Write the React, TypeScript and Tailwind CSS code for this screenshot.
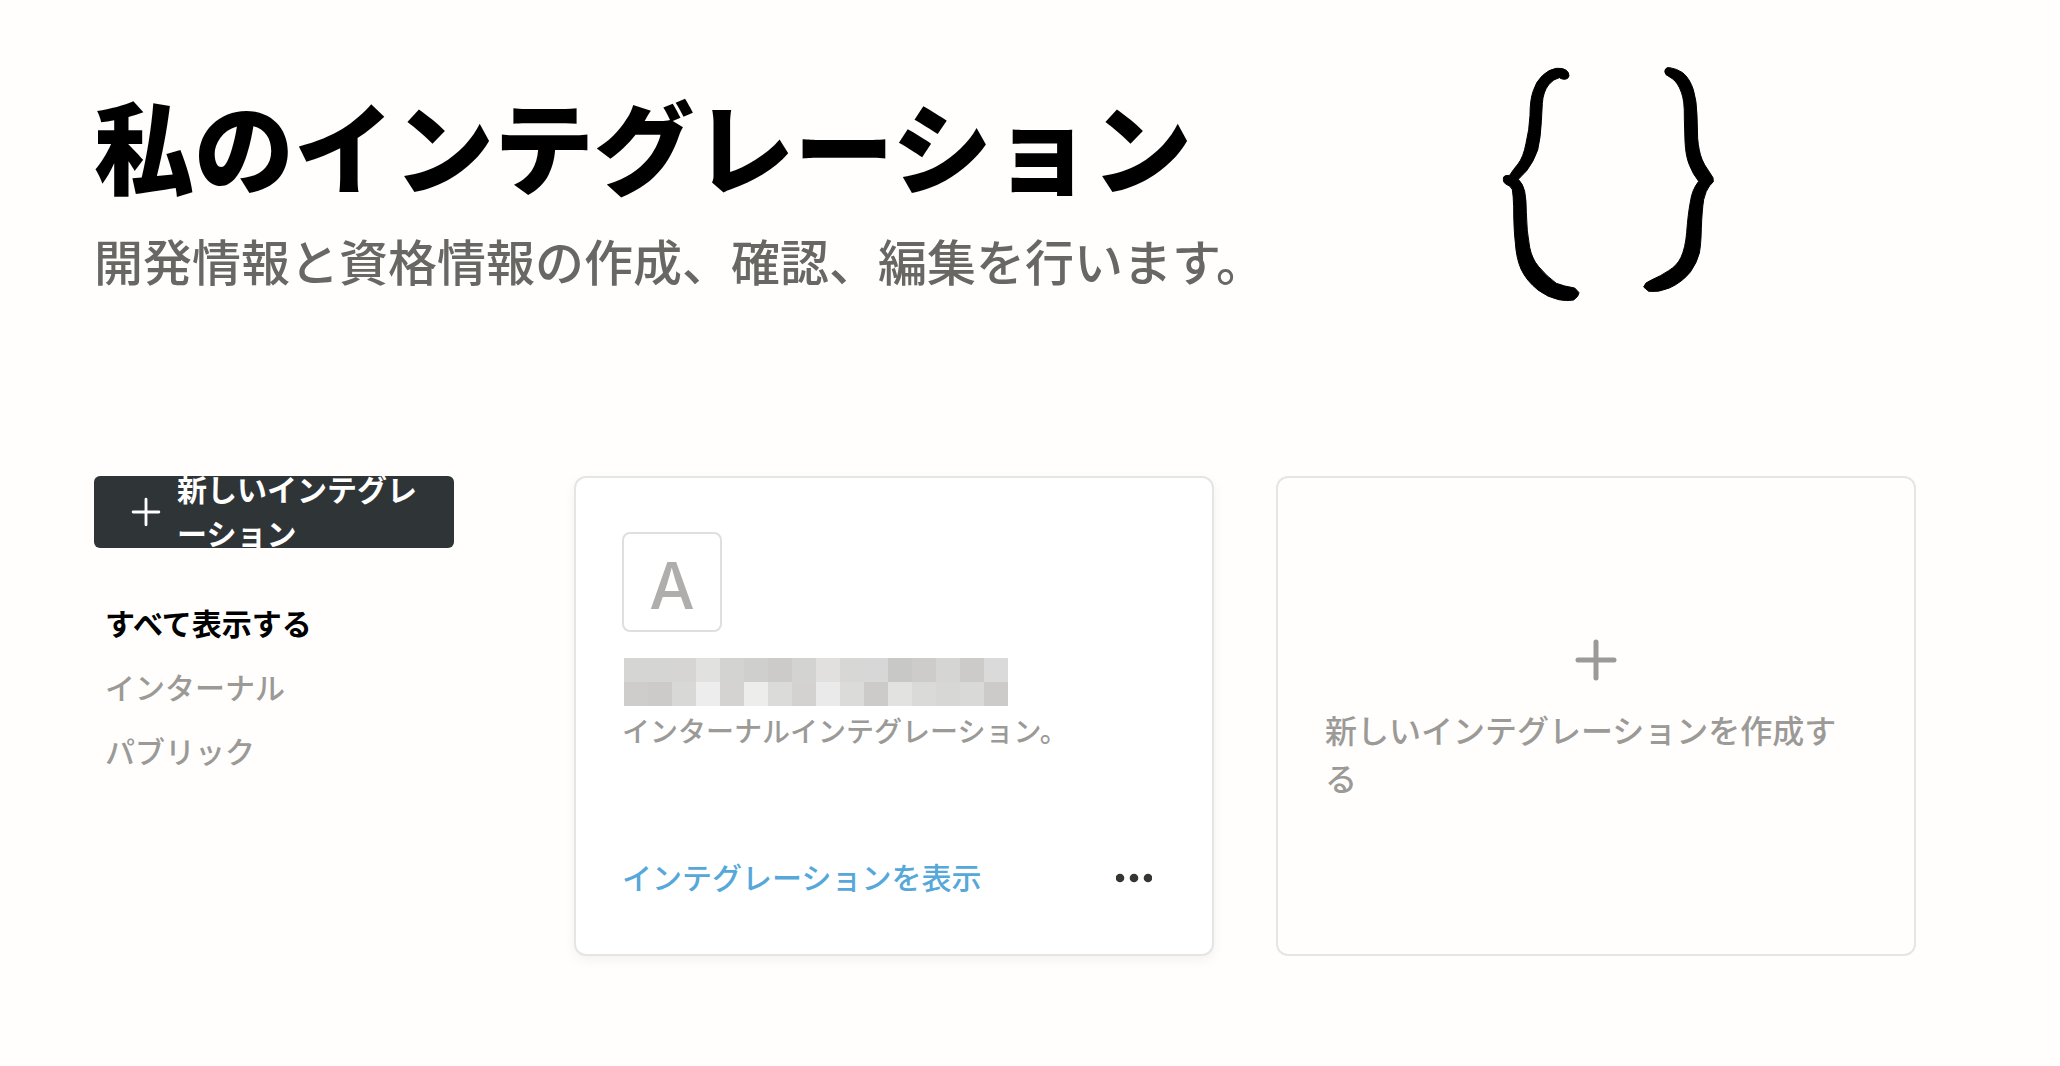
import { memo } from 'react';

interface NavItem {
  label: string;
  active?: boolean;
}

const NAV_ITEMS: NavItem[] = [
  { label: 'すべて表示する', active: true },
  { label: 'インターナル' },
  { label: 'パブリック' },
];

// Cell colours of the pixelated integration name, row by row.
const NAME_CELLS = [
  ['#d5d5d4', '#d5d5d4', '#d6d5d4', '#e1e1df', '#d3d3d2', '#cfcfce', '#cccbc9', '#d3d3d2', '#e1e0de', '#d7d7d6', '#d7d7d7', '#c8c8c6', '#cdccca', '#d5d5d4', '#cccbc9', '#dadada'],
  ['#cecdcc', '#cccbca', '#d8d8d7', '#ededed', '#d4d3d2', '#ededeb', '#dbdbda', '#d3d2d0', '#eaeaea', '#dbdbda', '#cccbca', '#e2e2e0', '#dadad9', '#d7d7d6', '#d9d9d8', '#cccbca'],
];

const PlusIcon = ({ className, strokeWidth }: { className: string; strokeWidth: number }) => (
  <svg viewBox="0 0 42 42" className={className} fill="none" stroke="currentColor" strokeWidth={strokeWidth} strokeLinecap="round" aria-hidden="true">
    <path d="M21 3v36M3 21h36" />
  </svg>
);

const Braces = memo(() => (
  <svg viewBox="0 0 780 810" className="w-[260px] h-[270px] shrink-0" fill="#000" stroke="#000" strokeWidth="3" strokeLinejoin="round" aria-hidden="true">
    <path d="M267 78Q264 88 254 88Q246 88 238 83Q220 87 206 104Q189 126 187 160L184 215Q182 262 173 300Q161 335 140 362L115 388Q129 402 134 424Q139 450 139 488Q140 545 149 592Q156 627 176 650Q201 680 229 700Q252 709 284 714Q292 722 297 728L293 739L281 750Q261 754 236 749Q203 742 174 720Q139 692 123 657Q109 625 106 578Q101 535 101 470Q100 437 97 419Q92 407 77 402Q70 397 70 389Q68 380 76 377L89 376Q100 358 114 342Q130 322 138 280Q148 240 150 196Q150 148 160 122Q168 95 187 77Q207 58 229 55Q250 53 259 61Q267 67 267 78Z" />
    <path d="M556 58Q560 51 569 53Q590 56 608 68Q629 85 640 119Q650 152 651 196L653 265Q656 303 666 328Q673 345 684 360L699 383L700 395L689 407Q677 422 671 449Q666 480 664 535Q663 583 658 609Q651 638 631 666Q606 697 568 714Q535 728 506 724Q497 716 491 711L498 699L514 690Q544 677 566 662Q592 646 603 622Q616 594 620 548Q624 492 631 456Q636 419 656 394Q638 371 629 347Q617 320 615 274L613 205Q614 151 604 127Q594 98 577 86Q565 78 558 74Q552 66 556 58Z" />
  </svg>
));
Braces.displayName = 'Braces';

const Sidebar = () => (
  <aside className="w-[360px] shrink-0">
    <button type="button" className="flex items-center w-full h-[72px] pl-[37px] pr-8 gap-4 overflow-hidden rounded-md bg-[#2f3437] text-white text-left">
      <PlusIcon className="w-[30px] h-[30px] shrink-0" strokeWidth={4} />
      <span className="pb-1 text-[30px] leading-[44px] font-bold">新しいインテグレーション</span>
    </button>
    <nav className="mt-[42px] flex flex-col px-[11px] text-[30px] leading-[64px]">
      {NAV_ITEMS.map((item) => (
        <a key={item.label} href="#" className={item.active ? 'text-black font-bold' : 'text-[#9b9a97] font-medium'}>
          {item.label}
        </a>
      ))}
    </nav>
  </aside>
);

const IntegrationCard = () => (
  <article className="flex flex-col h-[480px] px-[46px] pt-[54px] pb-[46px] rounded-xl border-2 border-[#e5e5e4] bg-white shadow-[0_4px_12px_rgba(15,15,15,0.05)]">
    <div className="flex items-center justify-center w-[100px] h-[100px] pt-2 rounded-lg border-2 border-[#dfdfde] font-['Inter','Liberation_Sans',sans-serif] text-[64px] leading-none font-medium text-[#afaeac]">
      A
    </div>
    <div className="mt-[26px] ml-0.5 grid grid-cols-[repeat(16,24px)]">
      {NAME_CELLS.flat().map((color, i) => (
        <div key={i} className="h-6" style={{ backgroundColor: color }} />
      ))}
    </div>
    <p className="mt-1 text-[28px] leading-10 font-medium text-[#9b9a97]">インターナルインテグレーション。</p>
    <div className="mt-auto flex items-center justify-between">
      <a href="#" className="pb-1 text-[30px] leading-[56px] font-medium text-[#55a8d9]">インテグレーションを表示</a>
      <button type="button" aria-label="メニュー" className="px-[14px] py-4 text-[#37352f]">
        <svg viewBox="0 0 36 10" className="w-9 h-[10px]" fill="currentColor" aria-hidden="true">
          <circle cx="4" cy="5" r="4.3" />
          <circle cx="18" cy="5" r="4.3" />
          <circle cx="32" cy="5" r="4.3" />
        </svg>
      </button>
    </div>
  </article>
);

const CreateCard = () => (
  <button type="button" className="flex flex-col items-center justify-center h-[480px] px-[47px] pt-2 rounded-xl border-2 border-[#e5e5e4] text-[#9b9a97]">
    <PlusIcon className="w-[42px] h-[42px]" strokeWidth={5} />
    <span className="mt-6 text-left text-[32px] leading-[48px] font-medium">新しいインテグレーションを作成する</span>
  </button>
);

export default function App() {
  return (
    <main lang="ja" className="min-h-screen bg-[#fffefc] pl-[94px] pr-[144px] pt-[50px] pb-[110px] font-['Noto_Sans_CJK_JP',sans-serif]">
      <header className="flex items-start justify-between pr-[176px]">
        <div className="pt-[34px]">
          <h1 className="text-[100px] leading-[120px] font-black text-black">私のインテグレーション</h1>
          <p className="mt-5 text-[49px] leading-[72px] font-medium text-[#686764]">開発情報と資格情報の作成、確認、編集を行います。</p>
        </div>
        <Braces />
      </header>
      <div className="mt-[156px] flex items-start gap-[120px]">
        <Sidebar />
        <section className="flex-1 grid grid-cols-2 gap-[62px]">
          <IntegrationCard />
          <CreateCard />
        </section>
      </div>
    </main>
  );
}
